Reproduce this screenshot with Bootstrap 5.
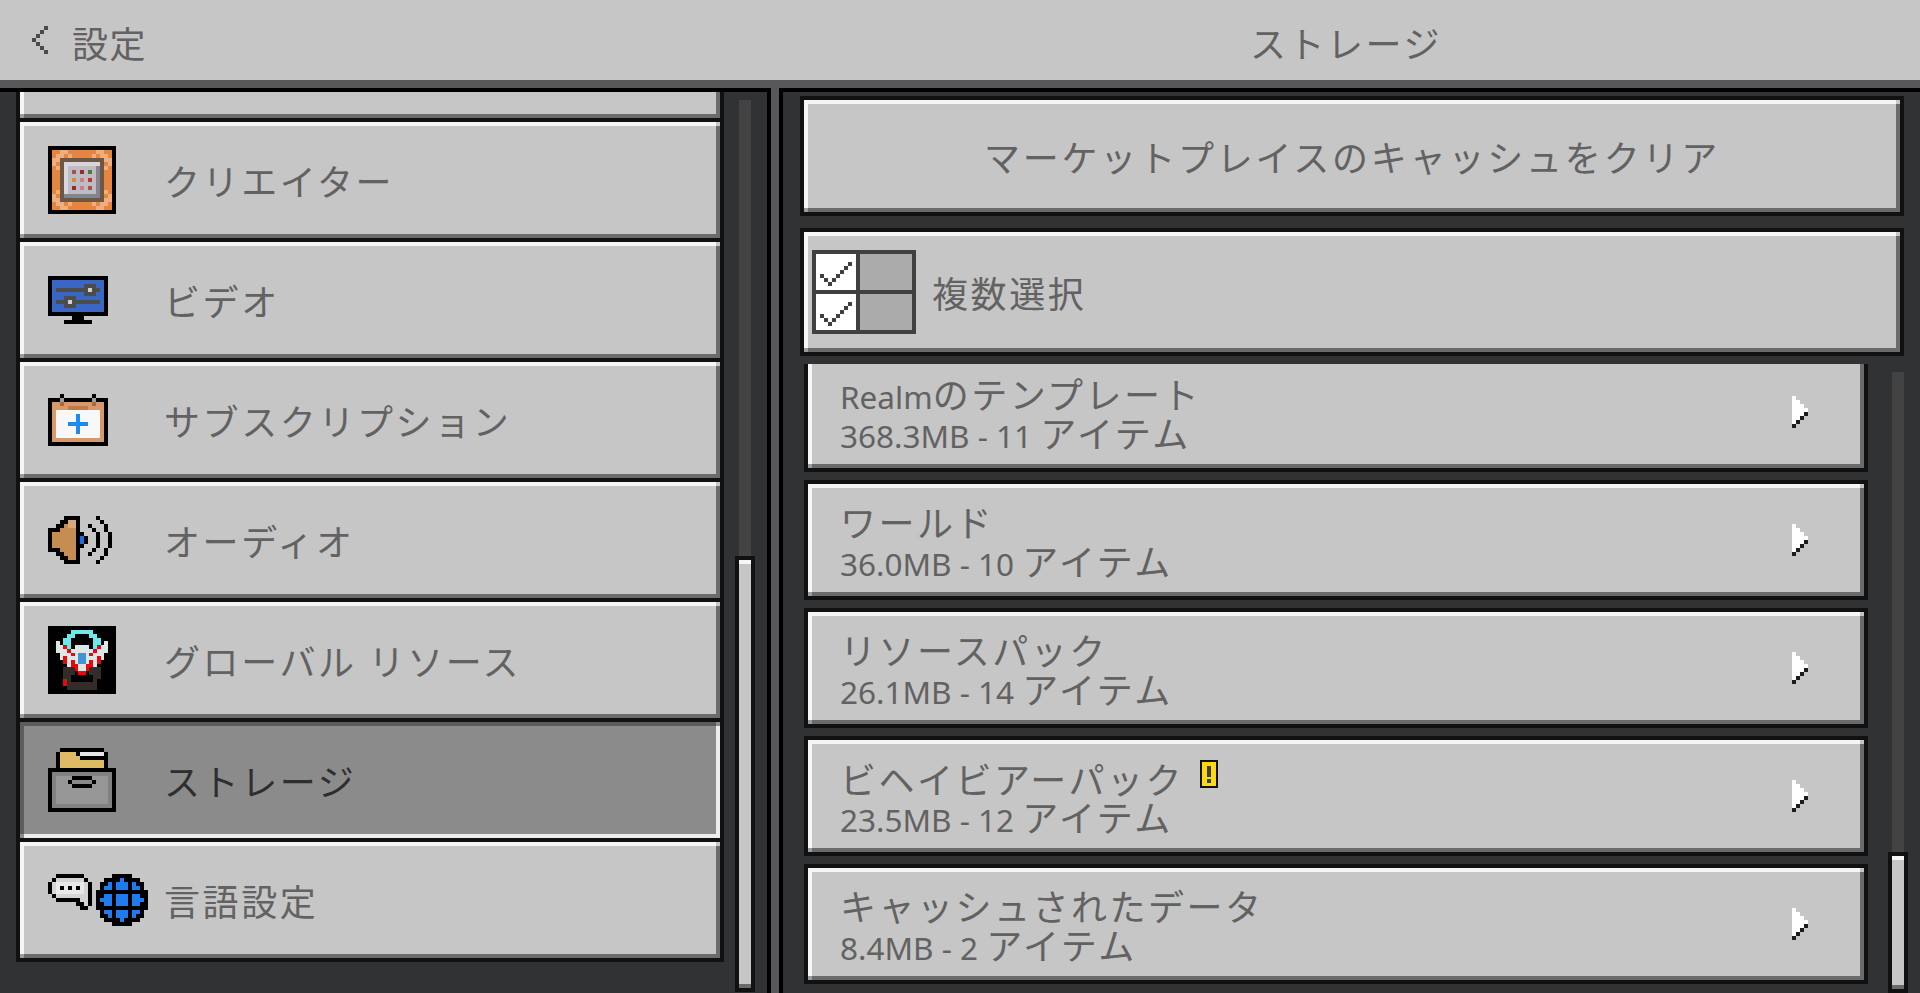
<!DOCTYPE html>
<html lang="ja">
<head>
  <meta charset="UTF-8">
  <title>ストレージ</title>
  <link href="https://cdn.jsdelivr.net/npm/bootstrap@5.3.2/dist/css/bootstrap.min.css" rel="stylesheet">
  <style>
    html, body {
      height: 993px;
      overflow: hidden;
      background-color: #313233;
    }
    body {
      font-family: "Noto Sans", "Noto Sans CJK JP", sans-serif;
      font-weight: 400;
      color: #626262;
    }
    svg { display: block; shape-rendering: crispEdges; flex: none; }

    /* header */
    .mc-header {
      height: 88px;
      background-color: #c6c6c6;
      border-bottom: 8px solid #58585a;
    }
    .mc-back { width: 779px; padding-left: 32px; gap: 24px; }
    .mc-head-label { font-size: 36px; letter-spacing: 1.5px; line-height: 1; padding-top: 9px; }
    .mc-head-title { letter-spacing: 2.5px; padding-right: 7px; }

    /* panels */
    .mc-main { height: 905px; }
    .mc-left {
      width: 771px;
      padding-left: 16px;
      border-top: 4px solid #000;
      border-right: 4px solid #000;
    }
    .mc-divider { width: 8px; background-color: #58585a; }
    .mc-right { border-left: 4px solid #000; border-top: 4px solid #000; padding: 4px 0 0 17px; }

    /* scrolled lists */
    .mc-clip { overflow: hidden; }
    .mc-left-clip { width: 708px; height: 901px; }
    .mc-left-list { margin-top: -90px; background-color: #111; padding: 0 4px 4px; gap: 4px; }
    .mc-right-clip { width: 1064px; height: 629px; }
    .mc-right-list { margin-top: -12px; gap: 8px; }

    /* bevelled stone buttons */
    .mc-stone {
      position: relative;
      background-color: #c6c6c6;
      box-shadow: inset 4px 4px 0 #f6f6f6, inset -4px -4px 0 #6b6b6b;
    }
    .mc-stone::before, .mc-stone::after {
      content: "";
      position: absolute;
      width: 4px;
      height: 4px;
    }
    .mc-stone::before { top: 0; right: 0; background-color: #c6c6c6; }
    .mc-stone::after { bottom: 0; left: 0; background-color: #9c9c9c; }
    .mc-stone.mc-active {
      background-color: #8b8b8b;
      box-shadow: inset 4px 4px 0 #5c5c5c, inset -4px -4px 0 #ececec;
      color: #2e2e2e;
    }
    .mc-stone.mc-active::before, .mc-stone.mc-active::after { background-color: #8b8b8b; }
    .mc-frame { border: 4px solid #111; }

    .mc-nav-item { height: 116px; padding-left: 28px; }
    .mc-nav-icon { width: 116px; }
    .mc-nav-label { font-size: 36px; letter-spacing: 2.6px; line-height: 1; padding-top: 5px; }

    .mc-wide { width: 1104px; height: 120px; font-size: 36px; letter-spacing: 2.8px; }
    .mc-wide .mc-stone > span { padding-top: 5px; }
    .mc-multi { width: 1104px; height: 128px; margin-top: 12px; margin-bottom: 8px; font-size: 36px; letter-spacing: 2.6px; }
    .mc-multi .mc-stone { padding-left: 8px; gap: 16px; }
    .mc-multi .mc-stone > span { padding-top: 5px; }
    .mc-lower { margin-left: 4px; }

    .mc-entry { width: 1064px; height: 120px; }
    .mc-entry .mc-stone { padding: 0 56px 0 32px; }
    .mc-entry-line { font-size: 31.5px; line-height: 38px; white-space: nowrap; }
    .mc-jp { font-size: 36px; letter-spacing: 2.5px; }
    .mc-entry-body { padding-top: 8px; }
    .mc-warn {
      width: 18px; height: 28px;
      background-color: #ffd814;
      border: 2px solid #111;
      margin-left: 16px;
      margin-top: -14px;
    }

    /* scroll bars */
    .mc-bar { width: 20px; }
    .mc-left-bar { margin-left: 11px; height: 900px; padding-top: 8px; }
    .mc-right-bar { margin-left: 20px; height: 629px; padding-top: 8px; }
    .mc-track { width: 12px; margin: 0 4px; background-color: #434343; }
    .mc-left-bar .mc-track { height: 456px; }
    .mc-right-bar .mc-track { height: 480px; }
    .mc-thumb {
      border: 4px solid #111;
      background-color: #c6c6c6;
      box-shadow: inset 0 4px 0 #f6f6f6, inset 0 -4px 0 #6b6b6b;
    }
  </style>
</head>
<body>

<!-- Top bar -->
<header class="mc-header d-flex align-items-center">
  <div class="mc-back d-flex align-items-center">
    <svg width="16" height="28" viewBox="0 0 16 28" fill="#4a4a4a"><path d="M12 0h4v4h-4zM8 4h4v4H8zM4 8h4v4H4zM0 12h4v4H0zM4 16h4v4H4zM8 20h4v4H8zM12 24h4v4h-4z"/></svg>
    <span class="mc-head-label">設定</span>
  </div>
  <div class="flex-grow-1 text-center mc-head-label mc-head-title">ストレージ</div>
</header>

<div class="mc-main d-flex">
  <!-- Left: settings sections -->
  <section class="mc-left d-flex">
    <div class="mc-clip mc-left-clip">
      <div class="mc-left-list d-flex flex-column">
        <div class="mc-stone mc-nav-item"></div>

        <div class="mc-stone mc-nav-item d-flex align-items-center">
          <div class="mc-nav-icon">
            <svg width="68" height="68" viewBox="54 48 204 204">
              <path fill="#000" d="M54 48H258V252H54z"/>
              <path fill="#e5853f" d="M66 60H246V240H66z"/>
              <path fill="#eeae7e" d="M90 60H114V72H90zM78 72H102V84H78zM114 72H126V84H114zM66 84H90V96H66zM66 96H78V108H66zM78 108H90V120H78zM198 60H222V72H198zM210 72H234V84H210zM186 72H198V84H186zM222 84H246V96H222zM234 96H246V108H234zM222 108H234V120H222zM90 228H114V240H90zM78 216H102V228H78zM114 216H126V228H114zM66 204H90V216H66zM66 192H78V204H66zM78 180H90V192H78zM198 228H222V240H198zM210 216H234V228H210zM186 216H198V228H186zM222 204H246V216H222zM234 192H246V204H234zM222 180H234V192H222z"/>
              <path fill="#6b5743" d="M90 84H222V216H90z"/>
              <path fill="#bdbbc4" d="M102 96H210V204H102z"/>
              <path fill="#d8d6dc" d="M102 96H210V108H102zM102 108H114V192H102z"/>
              <path fill="#85838c" d="M198 108H210V204H198zM102 192H198V204H102z"/>
              <path fill="#a8524f" d="M126 120H138V132H126zM174 168H186V180H174z"/>
              <path fill="#962b2b" d="M150 120H162V132H150zM126 168H138V180H126z"/>
              <path fill="#4f7a2f" d="M174 120H186V132H174z"/>
              <path fill="#cc9035" d="M126 144H138V156H126z"/>
              <path fill="#cc7f7f" d="M150 144H162V156H150zM150 168H162V180H150z"/>
              <path fill="#c8302e" d="M174 144H186V156H174z"/>
            </svg>
          </div>
          <span class="mc-nav-label">クリエイター</span>
        </div>

        <div class="mc-stone mc-nav-item d-flex align-items-center">
          <div class="mc-nav-icon">
            <svg width="60" height="48" viewBox="54 438 180 144">
              <path fill="#000" d="M54 438H234V558H54zM126 558H162V570H126zM102 570H186V582H102z"/>
              <path fill="#3a66c4" d="M66 450H222V546H66z"/>
              <path fill="#4c4c4c" d="M78 474H210V486H78zM162 462H198V498H162zM78 510H210V522H78zM102 498H138V534H102z"/>
              <path fill="#cfcfcf" d="M174 474H186V486H174zM114 510H126V522H114z"/>
            </svg>
          </div>
          <span class="mc-nav-label">ビデオ</span>
        </div>

        <div class="mc-stone mc-nav-item d-flex align-items-center">
          <div class="mc-nav-icon">
            <svg width="60" height="52" viewBox="54 42 180 156">
              <path fill="#000" d="M90 42H102V54H90zM186 42H198V54H186zM54 54H234V198H54z"/>
              <path fill="#9c9c9c" d="M90 54H102V66H90zM186 54H198V66H186z"/>
              <path fill="#d9986c" d="M66 66H222V186H66z"/>
              <path fill="#a8693f" d="M90 66H102V78H90zM186 66H198V78H186z"/>
              <path fill="#bf7b47" d="M114 78H174V90H114z"/>
              <path fill="#f8f8f8" d="M78 90H210V174H78z"/>
              <path fill="#1e8bf0" d="M138 102H150V162H138zM114 126H174V138H114z"/>
            </svg>
          </div>
          <span class="mc-nav-label">サブスクリプション</span>
        </div>

        <div class="mc-stone mc-nav-item d-flex align-items-center">
          <div class="mc-nav-icon">
            <svg width="64" height="48" viewBox="54 408 192 144">
              <path fill="#000" d="M102 408H150V420H102zM102 540H150V552H102zM138 420H150V540H138zM90 420H114V432H90zM90 528H114V540H90zM78 432H102V444H78zM78 516H102V528H78zM54 444H90V456H54zM54 504H90V516H54zM54 456H66V504H54zM150 456H162V468H150zM150 492H162V504H150zM162 468H174V492H162z"/>
              <path fill="#c68d52" d="M114 420H138V540H114zM102 432H114V528H102zM90 444H102V516H90zM66 456H90V504H66z"/>
              <path fill="#d8a877" d="M114 420H138V444H114z"/>
              <path fill="#1a6fe0" d="M150 468H162V492H150z"/>
              <path fill="#000" d="M174 432H186V444H174zM186 444H198V456H186zM198 456H210V504H198zM186 504H198V516H186zM174 516H186V528H174zM198 408H210V420H198zM210 420H222V432H210zM222 432H234V456H222zM234 456H246V504H234zM222 504H234V528H222zM210 528H222V540H210zM198 540H210V552H198z"/>
            </svg>
          </div>
          <span class="mc-nav-label">オーディオ</span>
        </div>

        <div class="mc-stone mc-nav-item d-flex align-items-center">
          <div class="mc-nav-icon">
            <svg width="68" height="68" viewBox="54 48 204 204">
              <path fill="#000" d="M54 48H258V252H54z"/>
              <path fill="#6ee8e8" d="M124 60H190V72H124zM110 72H134V84H110zM178 72H202V84H178zM100 84H122V116H100zM190 84H212V116H190z"/>
              <path fill="#dce8e8" d="M78 94H90V128H78zM90 106H100V150H90zM100 116H112V140H100zM222 94H234V128H222zM212 106H222V150H212zM200 116H212V140H200zM134 106H178V118H134zM124 118H190V128H124zM112 128H200V150H112zM112 150H124V172H112zM188 150H200V172H188zM134 150H178V182H134z"/>
              <path fill="#3e96d8" d="M144 128H168V162H144z"/>
              <path fill="#e80808" d="M100 106H112V117H100zM200 106H212V117H200zM112 117H124V128H112zM188 117H200V128H188zM124 128H134V138H124zM178 128H188V138H178zM100 139H112V161H100zM200 139H212V161H200zM124 150H134V172H124zM178 150H188V172H178zM134 162H144V182H134zM168 162H178V182H168zM144 182H168V194H144zM100 206H110V228H100z"/>
              <path fill="#332c28" d="M100 172H122V206H100zM190 172H212V206H190zM122 172H134V194H122zM178 172H190V194H178zM112 206H124V240H112zM190 206H200V240H190zM124 216H190V240H124z"/>
            </svg>
          </div>
          <span class="mc-nav-label">グローバル リソース</span>
        </div>

        <div class="mc-stone mc-active mc-nav-item d-flex align-items-center">
          <div class="mc-nav-icon">
            <svg width="68" height="64" viewBox="54 54 204 192">
              <path fill="#000" d="M90 54H222V66H90zM78 66H90V114H78zM222 66H234V114H222zM54 114H258V246H54z"/>
              <path fill="#ddb963" d="M90 66H138V78H90zM90 78H150V90H90zM90 90H222V114H90z"/>
              <path fill="#000" d="M138 66H150V78H138zM150 78H222V90H150z"/>
              <path fill="#e6e6e6" d="M150 66H222V78H150z"/>
              <path fill="#818181" d="M66 126H246V234H66z"/>
              <path fill="#969696" d="M78 138H234V222H78z"/>
              <path fill="#000" d="M126 138H186V150H126zM114 150H198V162H114zM126 162H186V174H126z"/>
              <path fill="#888" d="M126 150H186V162H126z"/>
            </svg>
          </div>
          <span class="mc-nav-label">ストレージ</span>
        </div>

        <div class="mc-stone mc-nav-item d-flex align-items-center">
          <div class="mc-nav-icon">
            <svg width="100" height="52" viewBox="54 42 300 156">
              <path fill="#000" d="M78 42H162V54H78zM66 54H174V66H66zM54 66H186V102H54zM66 102H186V114H66zM78 114H186V126H78zM138 126H186V138H138zM150 138H174V150H150z"/>
              <path fill="#d4d4d4" d="M78 54H162V66H78zM66 66H174V102H66zM78 102H174V114H78zM150 114H174V126H150zM162 126H174V138H162z"/>
              <path fill="#e8e8e8" d="M78 66H162V102H78z"/>
              <path fill="#000" d="M90 78H102V90H90zM114 78H126V90H114zM138 78H150V90H138z"/>
              <path fill="#000" d="M246 42H306V54H246zM222 54H330V66H222zM210 66H342V90H210zM198 90H354V150H198zM210 150H342V174H210zM222 174H330V186H222zM246 186H306V198H246z"/>
              <path fill="#1f7bf0" d="M258 102H294V138H258zM270 54H282V66H270zM258 66H294V90H258zM270 174H282V186H270zM258 150H294V174H258zM222 102H246V138H222zM210 114H222V126H210zM306 102H330V138H306zM330 114H342V126H330zM222 78H246V90H222zM234 66H246V78H234zM306 66H318V78H306zM306 78H330V90H306zM222 150H246V162H222zM234 162H246V174H234zM306 150H330V162H306zM306 162H318V174H306z"/>
            </svg>
          </div>
          <span class="mc-nav-label">言語設定</span>
        </div>
      </div>
    </div>

    <div class="mc-bar mc-left-bar d-flex flex-column">
      <div class="mc-track"></div>
      <div class="mc-thumb flex-grow-1"></div>
    </div>
  </section>

  <div class="mc-divider"></div>

  <!-- Right: storage -->
  <section class="mc-right flex-grow-1">
    <div class="mc-wide mc-frame">
      <div class="mc-stone h-100 d-flex align-items-center justify-content-center"><span>マーケットプレイスのキャッシュをクリア</span></div>
    </div>

    <div class="mc-multi mc-frame">
      <div class="mc-stone h-100 d-flex align-items-center">
        <svg width="104" height="84" viewBox="0 0 104 84">
          <path fill="#404040" d="M0 0H104V84H0z"/>
          <path fill="#fff" d="M4 4H44V40H4zM4 44H44V80H4z"/>
          <path fill="#ababab" d="M48 4H100V40H48zM48 44H100V80H48z"/>
          <path fill="#404040" d="M8 24h4v4H8zM12 28h4v4h-4zM16 32h4v4h-4zM20 28h4v4h-4zM24 24h4v4h-4zM28 20h4v4h-4zM32 16h4v4h-4zM36 12h4v4h-4zM8 64h4v4H8zM12 68h4v4h-4zM16 72h4v4h-4zM20 68h4v4h-4zM24 64h4v4h-4zM28 60h4v4h-4zM32 56h4v4h-4zM36 52h4v4h-4z"/>
        </svg>
        <span>複数選択</span>
      </div>
    </div>

    <div class="mc-lower d-flex">
      <div class="mc-clip mc-right-clip">
        <div class="mc-right-list d-flex flex-column">

          <div class="mc-entry mc-frame">
            <div class="mc-stone h-100 d-flex align-items-center justify-content-between">
              <div class="mc-entry-body">
                <div class="mc-entry-line">Realm<span class="mc-jp">のテンプレート</span></div>
                <div class="mc-entry-line">368.3MB - 11 <span class="mc-jp">アイテム</span></div>
              </div>
              <svg width="16" height="32" viewBox="0 0 16 32"><path fill="#fff" d="M0 0H4V28H0zM4 4H8V24H4zM8 8H12V20H8zM12 12H16V16H12z"/><path fill="#1c1c1c" d="M0 28h4v4H0zM4 24h4v4H4zM8 20h4v4H8zM12 16h4v4h-4z"/></svg>
            </div>
          </div>

          <div class="mc-entry mc-frame">
            <div class="mc-stone h-100 d-flex align-items-center justify-content-between">
              <div class="mc-entry-body">
                <div class="mc-entry-line"><span class="mc-jp">ワールド</span></div>
                <div class="mc-entry-line">36.0MB - 10 <span class="mc-jp">アイテム</span></div>
              </div>
              <svg width="16" height="32" viewBox="0 0 16 32"><path fill="#fff" d="M0 0H4V28H0zM4 4H8V24H4zM8 8H12V20H8zM12 12H16V16H12z"/><path fill="#1c1c1c" d="M0 28h4v4H0zM4 24h4v4H4zM8 20h4v4H8zM12 16h4v4h-4z"/></svg>
            </div>
          </div>

          <div class="mc-entry mc-frame">
            <div class="mc-stone h-100 d-flex align-items-center justify-content-between">
              <div class="mc-entry-body">
                <div class="mc-entry-line"><span class="mc-jp">リソースパック</span></div>
                <div class="mc-entry-line">26.1MB - 14 <span class="mc-jp">アイテム</span></div>
              </div>
              <svg width="16" height="32" viewBox="0 0 16 32"><path fill="#fff" d="M0 0H4V28H0zM4 4H8V24H4zM8 8H12V20H8zM12 12H16V16H12z"/><path fill="#1c1c1c" d="M0 28h4v4H0zM4 24h4v4H4zM8 20h4v4H8zM12 16h4v4h-4z"/></svg>
            </div>
          </div>

          <div class="mc-entry mc-frame">
            <div class="mc-stone h-100 d-flex align-items-center justify-content-between">
              <div class="mc-entry-body">
                <div class="mc-entry-line d-flex align-items-center"><span class="mc-jp">ビヘイビアーパック</span>
                  <svg class="mc-warn" width="18" height="28" viewBox="0 0 14 24"><path fill="#404040" d="M5 4H9V15H5zM5 17H9V21H5z"/></svg>
                </div>
                <div class="mc-entry-line">23.5MB - 12 <span class="mc-jp">アイテム</span></div>
              </div>
              <svg width="16" height="32" viewBox="0 0 16 32"><path fill="#fff" d="M0 0H4V28H0zM4 4H8V24H4zM8 8H12V20H8zM12 12H16V16H12z"/><path fill="#1c1c1c" d="M0 28h4v4H0zM4 24h4v4H4zM8 20h4v4H8zM12 16h4v4h-4z"/></svg>
            </div>
          </div>

          <div class="mc-entry mc-frame">
            <div class="mc-stone h-100 d-flex align-items-center justify-content-between">
              <div class="mc-entry-body">
                <div class="mc-entry-line"><span class="mc-jp">キャッシュされたデータ</span></div>
                <div class="mc-entry-line">8.4MB - 2 <span class="mc-jp">アイテム</span></div>
              </div>
              <svg width="16" height="32" viewBox="0 0 16 32"><path fill="#fff" d="M0 0H4V28H0zM4 4H8V24H4zM8 8H12V20H8zM12 12H16V16H12z"/><path fill="#1c1c1c" d="M0 28h4v4H0zM4 24h4v4H4zM8 20h4v4H8zM12 16h4v4h-4z"/></svg>
            </div>
          </div>

        </div>
      </div>

      <div class="mc-bar mc-right-bar d-flex flex-column">
        <div class="mc-track"></div>
        <div class="mc-thumb flex-grow-1"></div>
      </div>
    </div>
  </section>
</div>

<script src="https://cdn.jsdelivr.net/npm/bootstrap@5.3.2/dist/js/bootstrap.bundle.min.js"></script>
</body>
</html>
